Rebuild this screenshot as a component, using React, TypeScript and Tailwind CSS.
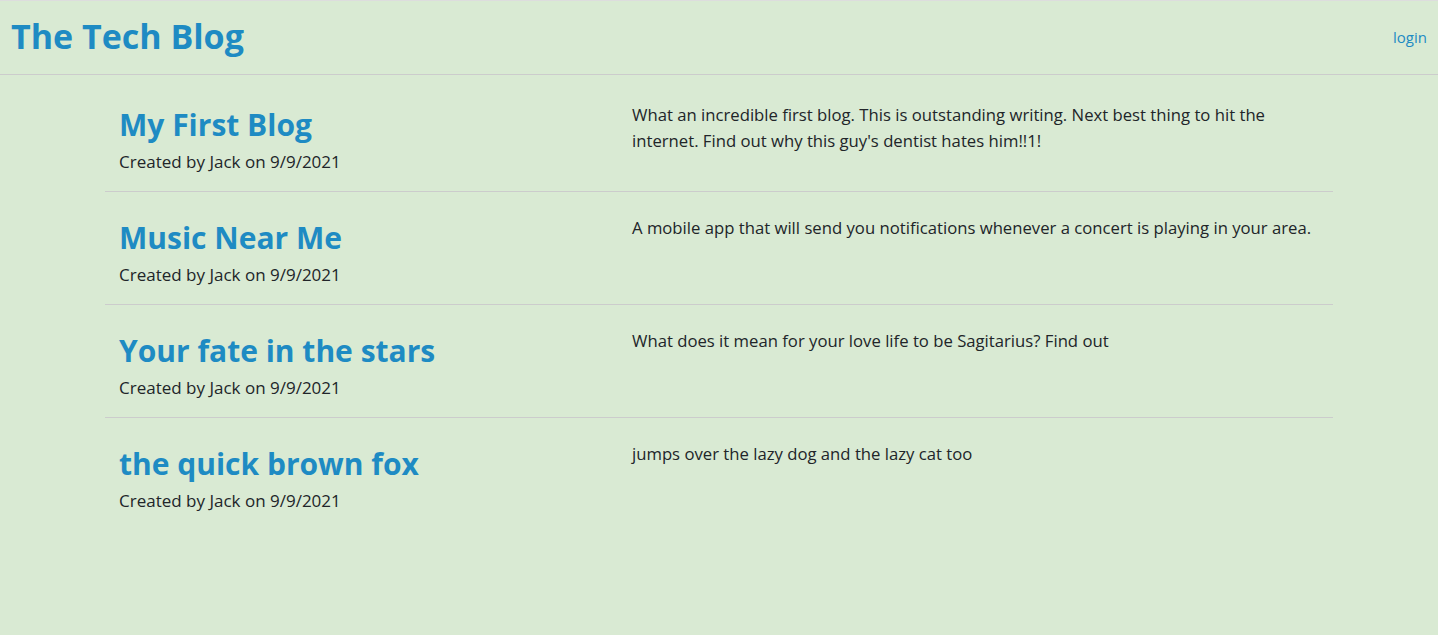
const posts = [
  {
    title: "My First Blog",
    body: "What an incredible first blog. This is outstanding writing. Next best thing to hit the internet. Find out why this guy's dentist hates him!!1!",
  },
  {
    title: "Music Near Me",
    body: "A mobile app that will send you notifications whenever a concert is playing in your area.",
  },
  {
    title: "Your fate in the stars",
    body: "What does it mean for your love life to be Sagitarius? Find out",
  },
  {
    title: "the quick brown fox",
    body: "jumps over the lazy dog and the lazy cat too",
  },
];

export default function App() {
  return (
    <div className="min-h-[635px] bg-[#d9ead3] font-['Open_Sans',sans-serif] text-[#212529]">
      <header className="flex h-[75px] items-center justify-between border-t border-b border-t-[#dddddd] border-b-[#cccccc] px-[11px]">
        <h1 className="pb-[3px] text-[34px] font-bold text-[#1e8bc3]">The Tech Blog</h1>
        <a href="#" className="text-[15px] text-[#1e8bc3]">
          login
        </a>
      </header>

      <main className="mx-auto w-[1228px] pt-[4px]">
        {posts.map((post, index) => (
          <article
            key={index}
            className={
              index < posts.length - 1
                ? "grid h-[113px] grid-cols-[527px_1fr] border-b border-[#cccccc]"
                : "grid h-[113px] grid-cols-[527px_1fr]"
            }
          >
            <div className="px-[14px] pt-[27px]">
              <h2 className="text-[30px] leading-[38px] font-bold text-[#1e8bc3]">
                {post.title}
              </h2>
              <p className="mt-[6px] text-[17px] leading-[24px]">Created by Jack on 9/9/2021</p>
            </div>
            <p className="pt-[23px] pr-4 text-[16.7px] leading-[26px]">{post.body}</p>
          </article>
        ))}
      </main>
    </div>
  );
}
